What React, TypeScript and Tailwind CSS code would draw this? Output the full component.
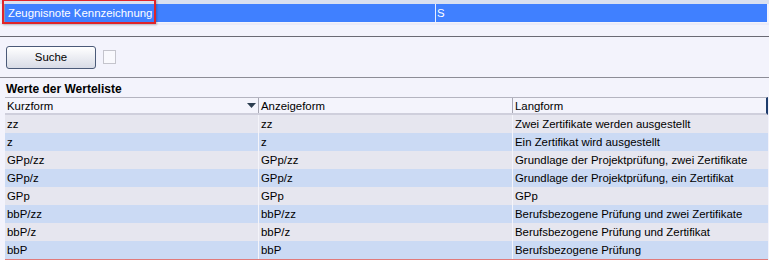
import React from "react";

const rows = [
  ["zz", "zz", "Zwei Zertifikate werden ausgestellt"],
  ["z", "z", "Ein Zertifikat wird ausgestellt"],
  ["GPp/zz", "GPp/zz", "Grundlage der Projektprüfung, zwei Zertifikate"],
  ["GPp/z", "GPp/z", "Grundlage der Projektprüfung, ein Zertifikat"],
  ["GPp", "GPp", "GPp"],
  ["bbP/zz", "bbP/zz", "Berufsbezogene Prüfung und zwei Zertifikate"],
  ["bbP/z", "bbP/z", "Berufsbezogene Prüfung und Zertifikat"],
  ["bbP", "bbP", "Berufsbezogene Prüfung"],
];

const App = () => {
  return (
    <div className="w-[769px] h-[260px] overflow-hidden bg-[#f3f3fc] text-[11.4px] text-black font-['Liberation_Sans',Arial,sans-serif]">
      {/* top field row */}
      <div className="h-[4px] bg-[#d9e0f0]" />
      <div className="relative flex h-[18px] ml-[4px] mr-[2px] border-l border-[#9098a8] bg-[#4080ff] text-white leading-[18px]">
        <div className="w-[431px] pl-[3px] border-r border-[#e8eeff]">Zeugnisnote Kennzeichnung</div>
        <div className="flex-1 pl-[1px]">S</div>
        <div className="absolute left-[-3px] top-[-5px] w-[154px] h-[25px] border-2 border-[#e0242a] shadow-[1px_1px_2px_rgba(0,0,0,0.25)]" />
      </div>
      <div className="h-[2px] mt-[1px] bg-[#ebebf8]" />
      <div className="h-[12px] border-b border-[#6a6a74]" />

      {/* search */}
      <div className="flex items-center gap-[7px] pl-[6px] pt-[8px] h-[41px] border-b border-[#8c8c96]">
        <button className="w-[90px] h-[23px] rounded-[3px] border border-[#4b5a78] bg-gradient-to-b from-white to-[#d8dbe6] text-[11.4px] leading-[20px] mb-[8px]">
          Suche
        </button>
        <div className="w-[13px] h-[14px] bg-[#f9f9fd] border border-[#c4c4cc] mb-[8px]" />
      </div>

      <div className="pl-[6px] pt-[3px] h-[19px] font-bold text-[12px] leading-[16px]">Werte der Werteliste</div>

      {/* table */}
      <div className="ml-[5px] mr-[1px]">
        <div className="flex h-[18px] border-t border-[#b4b4c0] border-b-2 border-b-[#cfcfdc] bg-[#f4f4fc] leading-[16px] border-r-2 border-r-[#1d3c6c]">
          <div className="w-[254px] pl-[2px] flex items-center justify-between pr-[2px] border-r border-[#a8a8b4]">
            <span>Kurzform</span>
            <svg width="9" height="5" viewBox="0 0 9 5"><path d="M0 0h9L4.5 5z" fill="#2c3e50" /></svg>
          </div>
          <div className="w-[254px] pl-[2px] border-r border-[#a8a8b4]">Anzeigeform</div>
          <div className="flex-1 pl-[2px]">Langform</div>
        </div>
        {rows.map((r, i) => (
          <div
            key={i}
            className={`flex h-[18px] leading-[18px] ${i % 2 === 0 ? "bg-[#e6e6ef]" : "bg-[#cbdaf4]"}`}
          >
            <div className="w-[254px] pl-[2px] border-r border-[#f4f4fa]">{r[0]}</div>
            <div className="w-[254px] pl-[2px] border-r border-[#f4f4fa]">{r[1]}</div>
            <div className="flex-1 pl-[2px]">{r[2]}</div>
          </div>
        ))}
        <div className="h-[4px] bg-[#e27a7a]" />
      </div>
    </div>
  );
};

export default App;
